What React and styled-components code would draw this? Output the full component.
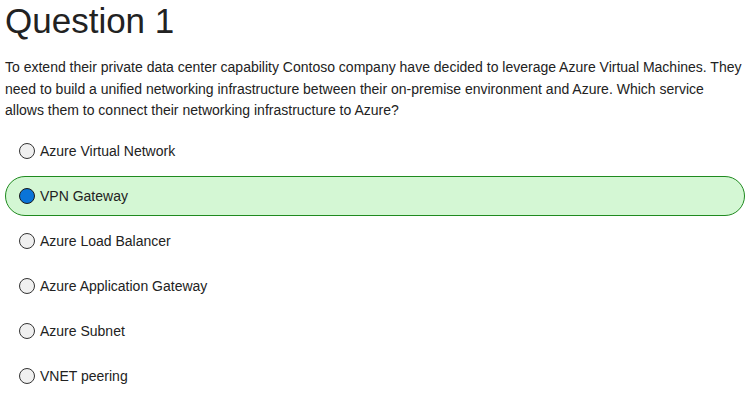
import React, { useState } from "react";
import styled, { createGlobalStyle } from "styled-components";

const Global = createGlobalStyle`
  html, body { margin: 0; padding: 0; background: #fff; }
  body { font-family: "Liberation Sans", Arial, sans-serif; color: #222; }
`;

const Page = styled.div`
  padding: 0 11px 0 5px;
`;

const Title = styled.h1`
  margin: 0;
  padding-top: 1px;
  font-size: 35px;
  font-weight: 400;
  line-height: 40px;
  color: #222;
`;

const Text = styled.p`
  margin: 16px 0 0;
  font-size: 14px;
  line-height: 21.5px;
  color: #222;
`;

const Options = styled.div`
  display: flex;
  flex-direction: column;
  gap: 5px;
  margin-top: 9px;
`;

const Option = styled.label`
  display: flex;
  align-items: center;
  gap: 5px;
  height: 40px;
  box-sizing: border-box;
  padding-left: 13px;
  border-radius: 20px;
  border: 1px solid ${(p) => (p.$selected ? "#1f8a1f" : "transparent")};
  background: ${(p) => (p.$selected ? "#d4f7d4" : "transparent")};
  font-size: 14px;
  color: #222;
  cursor: pointer;
`;

const Radio = styled.span`
  width: 16px;
  height: 16px;
  box-sizing: border-box;
  border-radius: 50%;
  border: 1.5px solid ${(p) => (p.$selected ? "#1a1a1a" : "#333")};
  background: ${(p) => (p.$selected ? "#0a74d8" : "#f0f0f0")};
  flex: none;
`;

const options = [
  "Azure Virtual Network",
  "VPN Gateway",
  "Azure Load Balancer",
  "Azure Application Gateway",
  "Azure Subnet",
  "VNET peering",
];

export default function App() {
  const [sel, setSel] = useState(1);
  return (
    <Page>
      <Global />
      <Title>Question 1</Title>
      <Text>
        To extend their private data center capability Contoso company have decided to leverage Azure Virtual Machines. They
        need to build a unified networking infrastructure between their on-premise environment and Azure. Which service
        allows them to connect their networking infrastructure to Azure?
      </Text>
      <Options>
        {options.map((o, i) => (
          <Option key={o} $selected={i === sel} onClick={() => setSel(i)}>
            <Radio $selected={i === sel} />
            {o}
          </Option>
        ))}
      </Options>
    </Page>
  );
}
